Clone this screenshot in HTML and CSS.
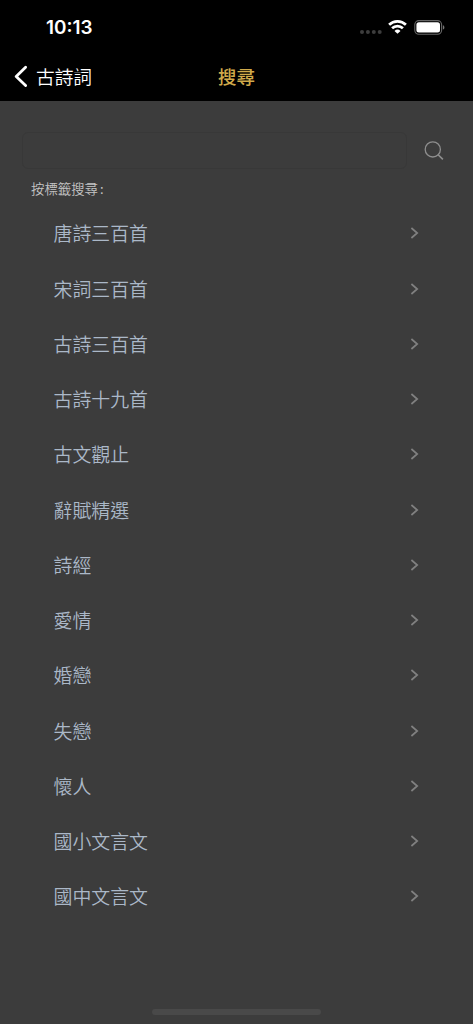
FILE: index.html
```html
<!DOCTYPE html>
<html lang="zh-Hant">
	<head>
		<meta charset="utf-8">
		<title>搜尋</title>
		<link rel="stylesheet" href="styles.css">
	</head>
	<body>
		<svg width="0" height="0" style="display: none">
			<symbol id="arrow" viewBox="0 0 9 12">
				<path d="M1.4 1L7.2 6L1.4 11" fill="none" stroke="#808080" stroke-width="1.7"/>
			</symbol>
		</svg>
		<div class="screen">
			<div class="status_bar">
				<span class="status_time">10:13</span>
				<div class="status_icons">
					<svg class="signal" width="22" height="4" viewBox="0 0 22 4" fill="#3d3d3d">
						<circle cx="2" cy="2" r="2"/>
						<circle cx="7.9" cy="2" r="2"/>
						<circle cx="13.8" cy="2" r="2"/>
						<circle cx="19.7" cy="2" r="2"/>
					</svg>
					<svg class="wifi" width="19" height="14" viewBox="0 0 19 14" fill="none" stroke="#fff" stroke-width="2.7">
						<path d="M1.1 4.8a12 12 0 0 1 16.8 0"/>
						<path d="M4.1 8.3a7.7 7.7 0 0 1 10.8 0"/>
						<path d="M9.5 13.8L6.5 10.9a4.4 4.4 0 0 1 6 0z" fill="#fff" stroke="none"/>
					</svg>
					<svg class="battery" width="31" height="15" viewBox="0 0 31 15">
						<rect x="0.8" y="0.6" width="26.8" height="13.6" rx="4" fill="none" stroke="#666" stroke-width="1.1"/>
						<rect x="2.4" y="2.2" width="23.6" height="10.4" rx="2.5" fill="#fff"/>
						<path d="M28.9 5.2c2 .7 2 3.7 0 4.4z" fill="#777"/>
					</svg>
				</div>
			</div>
			<div class="header">
				<a class="back">
					<svg width="13" height="22" viewBox="0 0 13 22" fill="none" stroke="#fff" stroke-width="2.8" stroke-linecap="round" stroke-linejoin="round">
						<path d="M11.6 2.2L2.2 11.6l9.4 9"/>
					</svg>
					<span>古詩詞</span>
				</a>
				<p class="header_title">搜尋</p>
			</div>
			<div class="search">
				<input class="search_input" type="text">
				<svg class="search_icon" width="20" height="20" viewBox="0 0 20 20" fill="none" stroke="#8e8e8e" stroke-width="1.3">
					<circle cx="8.8" cy="8.4" r="7.6"/>
					<path d="M13.9 13.5l5 4.9" stroke-width="1.6"/>
				</svg>
			</div>
			<p class="label">按標籤搜尋<span class="colon">:</span></p>
			<ul class="tags">
				<li><span>唐詩三百首</span><svg><use href="#arrow"/></svg></li>
				<li><span>宋詞三百首</span><svg><use href="#arrow"/></svg></li>
				<li><span>古詩三百首</span><svg><use href="#arrow"/></svg></li>
				<li><span>古詩十九首</span><svg><use href="#arrow"/></svg></li>
				<li><span>古文觀止</span><svg><use href="#arrow"/></svg></li>
				<li><span>辭賦精選</span><svg><use href="#arrow"/></svg></li>
				<li><span>詩經</span><svg><use href="#arrow"/></svg></li>
				<li><span>愛情</span><svg><use href="#arrow"/></svg></li>
				<li><span>婚戀</span><svg><use href="#arrow"/></svg></li>
				<li><span>失戀</span><svg><use href="#arrow"/></svg></li>
				<li><span>懷人</span><svg><use href="#arrow"/></svg></li>
				<li><span>國小文言文</span><svg><use href="#arrow"/></svg></li>
				<li><span>國中文言文</span><svg><use href="#arrow"/></svg></li>
			</ul>
			<div class="home_bar"></div>
		</div>
	</body>
</html>
```
FILE: styles.css
```css
html, body	{
	height: 100%;
	margin: 0;
	overflow: hidden;
}
p, ul	{
	margin: 0;
	padding: 0;
}
.screen	{
	display: flex;
	flex-direction: column;
	height: 100%;
	background: #3c3c3c;
	font-family: 'Noto Sans CJK TC', sans-serif;
	font-weight: 350;
}
.status_bar	{
	display: flex;
	justify-content: space-between;
	align-items: center;
	height: 54px;
	padding: 0 28px 0 46px;
	background: black;
}
.status_time	{
	font-family: Inter, sans-serif;
	font-size: 18.9px;
	font-weight: 600;
	color: white;
}
.status_icons	{
	display: flex;
	align-items: center;
}
.signal	{
	margin: 10px 6px 0 0;
}
.wifi	{
	margin-right: 7px;
}
.header	{
	display: grid;
	grid-template-columns: 1fr auto 1fr;
	align-items: center;
	height: 47px;
	padding: 0 14px 3px;
	box-sizing: border-box;
	background: black;
}
.back	{
	display: flex;
	align-items: center;
	gap: 9px;
	font-size: 18.7px;
	line-height: 28px;
	color: white;
}
.header_title	{
	font-size: 18.5px;
	font-weight: 500;
	line-height: 28px;
	color: #d0aa4b;
}
.search	{
	display: flex;
	align-items: center;
	height: 37px;
	margin: 31px 29px 0 22px;
}
.search_input	{
	flex: 1;
	height: 37px;
	box-sizing: border-box;
	border: 1px solid #383838;
	border-radius: 6px;
	background: transparent;
	outline: none;
}
.search_icon	{
	margin-left: 17px;
}
.label	{
	margin: 9px 0 0 31px;
	font-size: 13.4px;
	line-height: 20px;
	color: #c4c4c4;
}
.colon	{
	margin-left: 2px;
}
.tags	{
	margin: 8.2px 54px 0 53.5px;
	list-style: none;
}
.tags li	{
	display: flex;
	justify-content: space-between;
	align-items: center;
	height: 55.25px;
	font-size: 18.9px;
	color: #abb8c8;
}
.tags span	{
	margin-bottom: 2px;
}
.tags svg	{
	width: 9px;
	height: 12px;
	margin-bottom: 1px;
}
.home_bar	{
	width: 169px;
	height: 6px;
	margin: auto auto 9px;
	border-radius: 3px;
	background: #494949;
}
```
